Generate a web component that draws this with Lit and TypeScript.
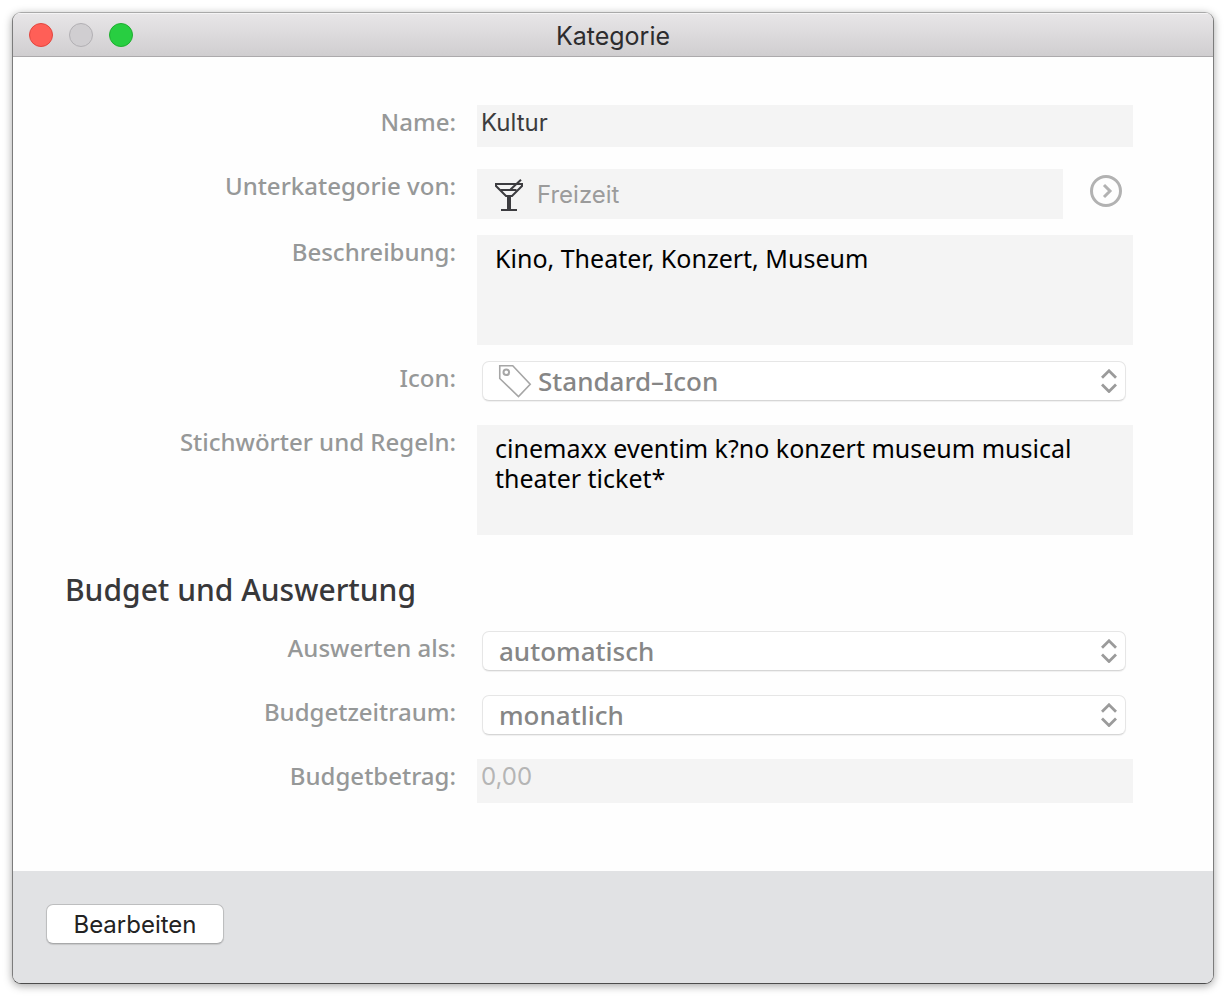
import { LitElement, html, css, nothing, TemplateResult } from "lit";
import { customElement } from "lit/decorators.js";

const tagIcon = html`<svg class="tag" viewBox="0 0 34 34" width="34" height="34" aria-hidden="true">
  <path d="M1.75 1.75h13L32.2 20.2 20.5 32.5 1.75 14.5z" />
  <circle cx="8.3" cy="8.3" r="2.8" />
</svg>`;

const glassIcon = html`<svg class="glass" viewBox="0 0 28 34" width="28" height="34" aria-hidden="true">
  <path d="M1 7h26v2L17 19h-6L1 9z" stroke-width="2" />
  <path d="M5.5 13h16" stroke-width="2" />
  <path d="M14 19v13.5" stroke-width="4" />
  <path d="M6 33h16" stroke-width="2" />
  <path d="M15.5 12.5L26 2.7" stroke-width="2" />
</svg>`;

@customElement("app-root")
class AppRoot extends LitElement {
  static styles = css`
    :host {
      display: flex;
      box-sizing: border-box;
      min-height: 100vh;
      padding: 12px;
      background: #fff;
      font: 500 24px/34px "Noto Sans", sans-serif;
    }
    .window {
      flex: 1;
      display: flex;
      flex-direction: column;
      overflow: hidden;
      border: 1px solid #7c7c7c;
      border-top-color: #a9a9a9;
      border-bottom-color: #4c4c4c;
      border-radius: 9px;
      background: #fefefe;
      box-shadow: 0 2px 8px rgba(0, 0, 0, 0.35);
    }
    .titlebar {
      display: grid;
      grid-template-columns: 1fr auto 1fr;
      align-items: center;
      height: 44px;
      box-sizing: border-box;
      padding: 0 16px;
      background: linear-gradient(#e8e6e8, #d0ced0);
      border-bottom: 1px solid #acaaac;
      box-shadow: inset 0 1px #f5f4f5;
    }
    .lights {
      display: flex;
      gap: 16px;
    }
    .light {
      width: 24px;
      height: 24px;
      box-sizing: border-box;
      padding: 0;
      border-radius: 50%;
      border: 1px solid;
    }
    .close {
      background: #ff5f57;
      border-color: #e2463f;
    }
    .minimize {
      background: #d0ced1;
      border-color: #b2b0b4;
    }
    .zoom {
      background: #28ce41;
      border-color: #1fae30;
    }
    .title {
      margin: 0;
      padding-top: 2px;
      font: 400 25px/34px Inter, sans-serif;
      color: #2d2c2e;
    }
    .form {
      flex: 1;
      display: flex;
      flex-direction: column;
      padding: 48px 80px 68px 52px;
    }
    .row {
      display: grid;
      grid-template-columns: 391px minmax(0, 1fr);
      column-gap: 21px;
      align-items: start;
      padding-bottom: 24px;
    }
    .row.snug {
      padding-bottom: 16px;
    }
    .row.plain {
      padding-bottom: 22px;
    }
    .row.last {
      padding-bottom: 0;
    }
    .label {
      text-align: right;
      color: #969898;
    }
    .field {
      display: block;
      width: 100%;
      height: 42px;
      box-sizing: border-box;
      margin: 0;
      padding: 0 4px 8px;
      border: 0;
      border-radius: 0;
      outline: 0;
      background: #f4f4f4;
      font: 400 24px/34px Inter, sans-serif;
      color: #3c3c3e;
    }
    .amount {
      height: 44px;
      padding-bottom: 10px;
    }
    .amount::placeholder {
      color: #b5b5b5;
      opacity: 1;
    }
    .area {
      height: 110px;
      padding: 8px 18px;
      resize: none;
      overflow: hidden;
      font: 400 25px/30px "Noto Sans", sans-serif;
      color: #000;
    }
    .parent {
      display: flex;
      align-items: flex-start;
      padding-right: 11px;
      gap: 27px;
    }
    .chip {
      flex: 1;
      display: flex;
      align-items: center;
      gap: 14px;
      height: 50px;
      padding-left: 18px;
      background: #f4f4f4;
    }
    .chip .field {
      flex: 1;
      min-width: 0;
      padding: 0;
      background: transparent;
      color: #9b9b9b;
    }
    .glass {
      flex: none;
      fill: none;
      stroke: #3c3c40;
    }
    .go {
      width: 32px;
      height: 32px;
      margin: 6px 0 0;
      padding: 0;
      border: 0;
      background: none;
    }
    .go svg {
      display: block;
      fill: none;
      stroke: #b2b2b2;
      stroke-width: 3;
    }
    .popup {
      display: grid;
      grid-template-columns: auto 1fr;
      align-items: center;
      height: 40px;
      box-sizing: border-box;
      margin: 0 7px 0 5px;
      background: #fff;
      border: 1px solid #e6e6e6;
      border-bottom-color: #d6d6d6;
      border-radius: 7px;
      box-shadow: 0 1px 1px rgba(0, 0, 0, 0.06);
      position: relative;
    }
    .tag {
      margin-left: 15px;
      margin-right: -10px;
      fill: none;
      stroke: #a6a6a6;
      stroke-width: 1.6;
    }
    .tag circle {
      stroke-width: 2;
    }
    .choice {
      grid-column: 2;
      width: 100%;
      height: 38px;
      margin: 0;
      padding: 0 40px 0 16px;
      border: 0;
      background: transparent;
      appearance: none;
      font: 500 26px/38px "Noto Sans", sans-serif;
      color: #868686;
      opacity: 1;
    }
    .arrows {
      position: absolute;
      right: 8px;
      top: 7px;
      fill: none;
      stroke: #9b9b9b;
      stroke-width: 2.8;
      pointer-events: none;
    }
    .section {
      margin: 11px 0 21px;
      font: 500 30px/40px "Noto Sans", sans-serif;
      color: #38383a;
    }
    .footer {
      padding: 33px 33px 39px;
      background: #e1e2e4;
    }
    .edit {
      display: block;
      height: 40px;
      min-width: 178px;
      padding: 2px 24px 0;
      border: 1px solid #bdbebf;
      border-bottom-color: #a8a9aa;
      border-radius: 7px;
      background: #fff;
      box-shadow: 0 1px 1px rgba(0, 0, 0, 0.12);
      font: 400 24px/34px Inter, sans-serif;
      color: #222;
    }
  `;

  private popupRow(id: string, label: string, value: string, icon?: TemplateResult) {
    return html`<div class="row">
      <label class="label" for=${id}>${label}</label>
      <div class="popup">
        ${icon ?? nothing}
        <select class="choice" id=${id} disabled>
          <option>${value}</option>
        </select>
        <svg class="arrows" viewBox="0 0 16 24" width="16" height="24" aria-hidden="true">
          <path d="M1 8.8L8 1.8l7 7M1 15.5l7 7 7-7" />
        </svg>
      </div>
    </div>`;
  }

  render() {
    return html`<main class="window">
      <header class="titlebar">
        <div class="lights">
          <button class="light close" aria-label="Schließen"></button>
          <button class="light minimize" aria-label="Minimieren" disabled></button>
          <button class="light zoom" aria-label="Zoomen"></button>
        </div>
        <h1 class="title">Kategorie</h1>
      </header>
      <form class="form">
        <div class="row plain">
          <label class="label" for="name">Name:</label>
          <input class="field" id="name" readonly .value=${"Kultur"} />
        </div>
        <div class="row snug">
          <label class="label" for="parent">Unterkategorie von:</label>
          <div class="parent">
            <div class="chip">
              ${glassIcon}
              <input class="field" id="parent" readonly .value=${"Freizeit"} />
            </div>
            <button class="go" type="button" aria-label="Unterkategorie öffnen">
              <svg viewBox="0 0 32 32" width="32" height="32">
                <circle cx="16" cy="16" r="14.5" />
                <path d="M14 10l6 6-6 6" />
              </svg>
            </button>
          </div>
        </div>
        <div class="row snug">
          <label class="label" for="description">Beschreibung:</label>
          <textarea class="field area" id="description" readonly spellcheck="false"
            .value=${"Kino, Theater, Konzert, Museum"}></textarea>
        </div>
        ${this.popupRow("icon", "Icon:", "Standard–Icon", tagIcon)}
        <div class="row">
          <label class="label" for="rules">Stichwörter und Regeln:</label>
          <textarea class="field area" id="rules" readonly spellcheck="false"
            .value=${"cinemaxx eventim k?no konzert museum musical theater ticket*"}></textarea>
        </div>
        <h2 class="section">Budget und Auswertung</h2>
        ${this.popupRow("evaluate", "Auswerten als:", "automatisch")}
        ${this.popupRow("period", "Budgetzeitraum:", "monatlich")}
        <div class="row last">
          <label class="label" for="amount">Budgetbetrag:</label>
          <input class="field amount" id="amount" readonly placeholder="0,00" />
        </div>
      </form>
      <footer class="footer">
        <button class="edit">Bearbeiten</button>
      </footer>
    </main>`;
  }
}
